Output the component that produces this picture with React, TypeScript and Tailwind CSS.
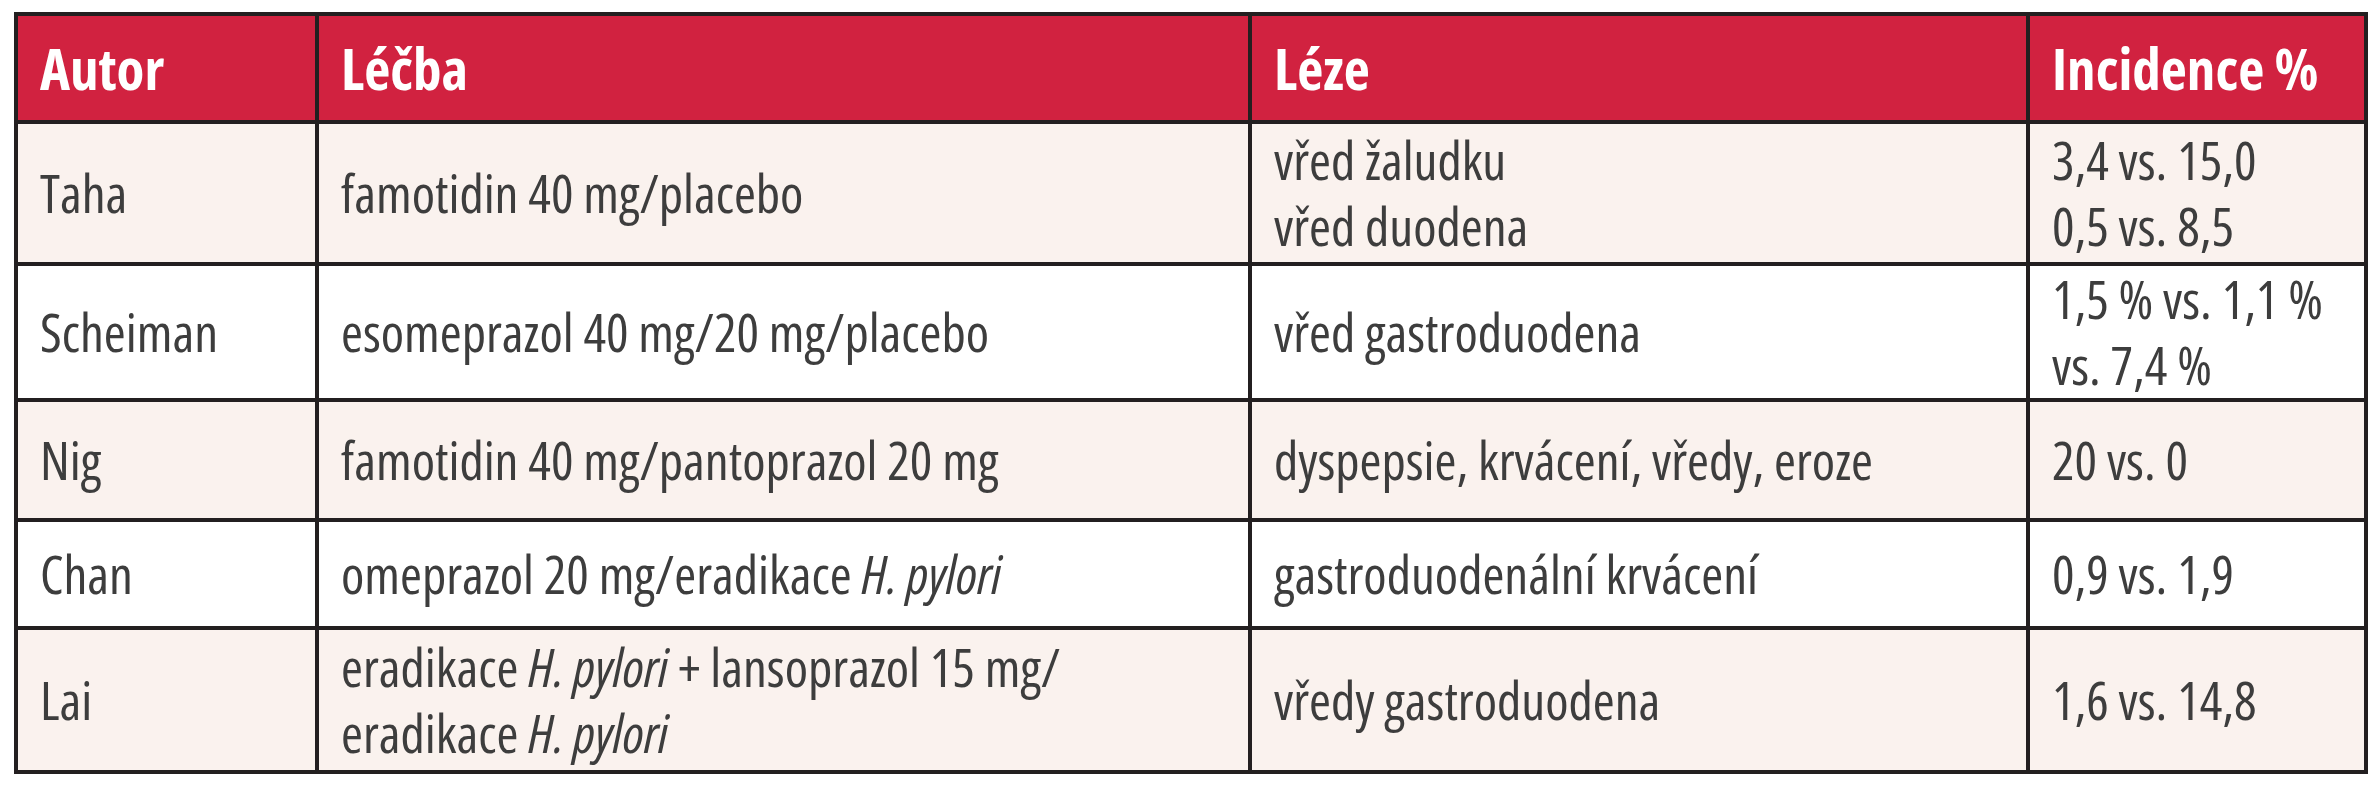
import React from "react";

interface Row {
  autor: string;
  lecba: React.ReactNode;
  leze: React.ReactNode;
  incidence: React.ReactNode;
  h: string;
}

const HP = () => <i>H. pylori</i>;

const rows: Row[] = [
  {
    autor: "Taha",
    lecba: "famotidin 40 mg/placebo",
    leze: (
      <>
        vřed žaludku
        <br />
        vřed duodena
      </>
    ),
    incidence: (
      <>
        3,4 vs. 15,0
        <br />
        0,5 vs. 8,5
      </>
    ),
    h: "h-[142px]",
  },
  {
    autor: "Scheiman",
    lecba: "esomeprazol 40 mg/20 mg/placebo",
    leze: "vřed gastroduodena",
    incidence: (
      <>
        1,5 % vs. 1,1 %
        <br />
        vs. 7,4 %
      </>
    ),
    h: "h-[136px]",
  },
  {
    autor: "Nig",
    lecba: "famotidin 40 mg/pantoprazol 20 mg",
    leze: "dyspepsie, krvácení, vředy, eroze",
    incidence: "20 vs. 0",
    h: "h-[120px]",
  },
  {
    autor: "Chan",
    lecba: (
      <>
        omeprazol 20 mg/eradikace <HP />
      </>
    ),
    leze: "gastroduodenální krvácení",
    incidence: "0,9 vs. 1,9",
    h: "h-[108px]",
  },
  {
    autor: "Lai",
    lecba: (
      <>
        eradikace <HP /> + lansoprazol 15 mg/
        <br />
        eradikace <HP />
      </>
    ),
    leze: "vředy gastroduodena",
    incidence: "1,6 vs. 14,8",
    h: "h-[144px]",
  },
];

const cell = "border-[4px] border-[#231f20] pl-[22px] pr-[10px] align-middle whitespace-nowrap";

export default function App() {
  return (
    <div className="w-[2380px] h-[800px] bg-white pt-[12px] pl-[14px] font-['Open_Sans',sans-serif] [font-stretch:75%]">
      <table className="w-[2350px] table-fixed border-collapse border-[4px] border-[#231f20] text-[53px] leading-[66px] text-[#3d3d3d]">
        <colgroup>
          <col className="w-[301px]" />
          <col className="w-[933px]" />
          <col className="w-[778px]" />
          <col className="w-[338px]" />
        </colgroup>
        <thead>
          <tr className="h-[108px] bg-[#d12240] text-white text-[57px] font-bold">
            {["Autor", "Léčba", "Léze", "Incidence %"].map((t) => (
              <th key={t} className={`${cell} text-left`}>
                {t}
              </th>
            ))}
          </tr>
        </thead>
        <tbody>
          {rows.map((r, i) => (
            <tr key={r.autor} className={`${r.h} ${i % 2 === 0 ? "bg-[#faf2ee]" : "bg-white"}`}>
              <td className={cell}>{r.autor}</td>
              <td className={cell}>{r.lecba}</td>
              <td className={cell}>{r.leze}</td>
              <td className={cell}>{r.incidence}</td>
            </tr>
          ))}
        </tbody>
      </table>
    </div>
  );
}
